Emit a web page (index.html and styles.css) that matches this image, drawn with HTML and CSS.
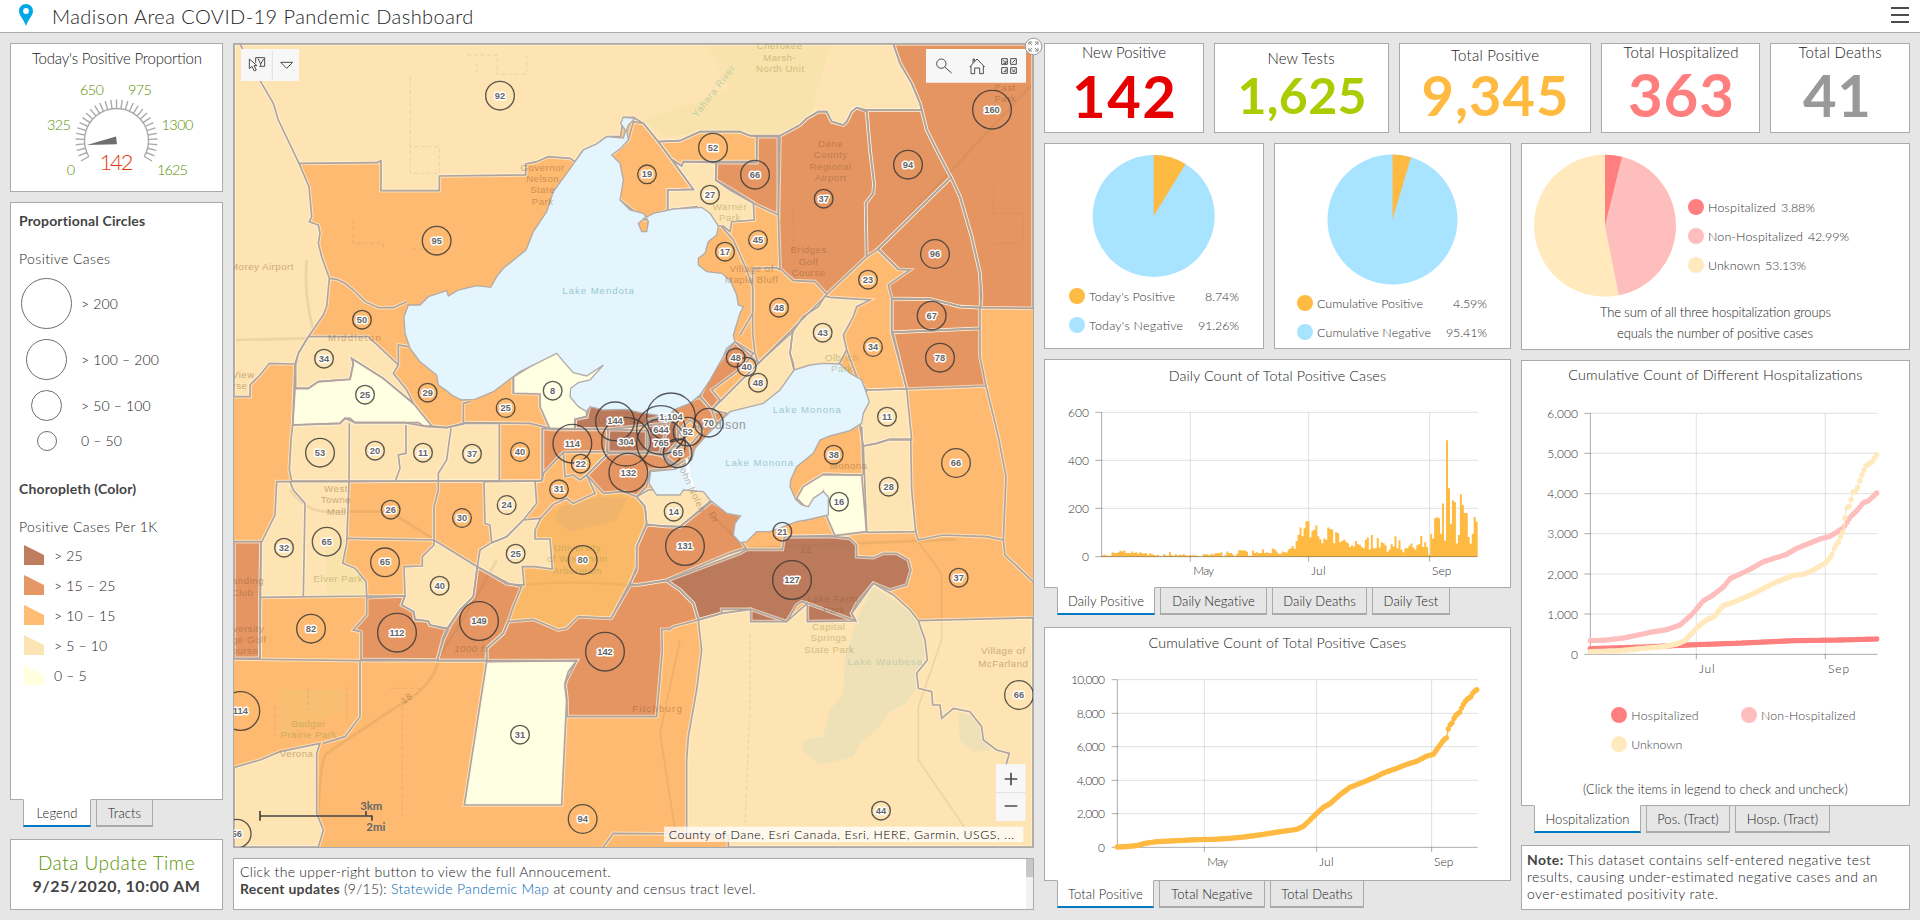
FILE: index.html
```html
<!DOCTYPE html>
<html lang="en">
<head>
<meta charset="utf-8">
<title>Madison Area COVID-19 Pandemic Dashboard</title>
<link rel="stylesheet" href="styles.css">
</head>
<body>
<header class="header">
  <svg class="pin" viewBox="0 0 14 22" width="14" height="22"><path d="M7 0C3 0 0 3 0 7c0 4.500 4.500 8 7 15 2.500-7 7-10.500 7-15 0-4-3-7-7-7z" fill="#00a9e6"/><circle cx="7" cy="7" r="2.900" fill="#fff"/></svg>
  <h1 class="title">Madison Area COVID-19 Pandemic Dashboard</h1>
  <div class="menu"><i></i><i></i><i></i></div>
</header>
<main class="board">
  <section class="col left">
    <div class="panel gauge">
      <svg width="211" height="147" viewBox="11 44 211 147">
        <text class="t" x="117" y="64" textLength="170" font-size="15">Today's Positive Proportion</text>
        <g id="ticks" stroke="#aaa" stroke-width="1.400" fill="none"></g>
        <path d="M86.800 145 116 136.500 117 144.300Z" fill="#6e6e6e"/>
        <g class="green" font-size="14.500">
          <text x="92" y="95" textLength="24">650</text><text x="140" y="95" textLength="24">975</text>
          <text x="59" y="130" textLength="24">325</text><text x="177.500" y="130" textLength="32">1300</text>
          <text x="71" y="175">0</text><text x="172.500" y="175" textLength="31">1625</text>
        </g>
        <text x="116.500" y="170" textLength="34" font-size="22" text-anchor="middle" fill="#e03c08">142</text>
      </svg>
    </div>
    <div class="tabbed">
      <div class="panel legend">
        <h2>Proportional Circles</h2>
        <p class="sub">Positive Cases</p>
        <ul class="sizes">
          <li class="s1"><i></i><span>&gt; 200</span></li>
          <li class="s2"><i></i><span>&gt; 100 – 200</span></li>
          <li class="s3"><i></i><span>&gt; 50 – 100</span></li>
          <li class="s4"><i></i><span>0 – 50</span></li>
        </ul>
        <h2>Choropleth (Color)</h2>
        <p class="sub">Positive Cases Per 1K</p>
        <ul class="colors">
          <li class="c1"><i></i><span>&gt; 25</span></li>
          <li class="c2"><i></i><span>&gt; 15 – 25</span></li>
          <li class="c3"><i></i><span>&gt; 10 – 15</span></li>
          <li class="c4"><i></i><span>&gt; 5 – 10</span></li>
          <li class="c5"><i></i><span>0 – 5</span></li>
        </ul>
      </div>
      <nav class="tabs"><a class="on w68">Legend</a><a class="w57">Tracts</a></nav>
    </div>
    <div class="panel date"><p class="d1">Data Update Time</p><p class="d2">9/25/2020, 10:00 AM</p></div>
  </section>

  <section class="col middle">
    <div class="panel map">
      <svg width="799" height="803" viewBox="12 12 2397 2409">
        <defs>
          <path id="mendota" d="M1172 250L1180 232 1215 235 1195 255 1190 270 1195 300 1172 325 1145 345 1170 370 1180 420 1170 480 1200 510 1240 520 1248 530 1225 550 1235 575 1250 575 1255 545 1248 532 1270 520 1330 507 1415 502 1440 520 1465 558 1460 585 1435 605 1425 640 1405 655 1405 675 1430 695 1475 700 1500 720 1520 765 1525 795 1540 800 1530 820 1510 885 1515 905 1490 925 1480 950 1440 1020 1410 1065 1380 1090 1335 1108 1310 1130 1230 1118 1190 1108 1120 1110 1080 1100 1070 1115 1045 1100 1020 1070 1022 1045 1045 1028 1080 1020 1120 975 1070 1008 1030 998 1005 970 980 940 920 970 870 995 790 1055 735 1078 695 1080 665 1065 650 1052 625 1035 620 1005 570 965 540 925 525 880 522 830 535 795 570 795 595 770 650 752 655 768 685 750 740 737 782 742 800 710 820 685 888 630 910 575 950 515 970 455 1010 400 1035 365 1060 330 1100 312 1130 290 1180 294 1187 272Z"/>
          <path id="monona" d="M1692 990L1740 975 1780 970 1830 972 1860 1000 1895 1020 1908 1055 1918 1085 1900 1120 1895 1150 1860 1172 1800 1188 1770 1200 1750 1240 1700 1280 1682 1320 1680 1340 1697 1378 1715 1395 1735 1400 1750 1375 1780 1355 1795 1370 1795 1425 1730 1440 1700 1445 1620 1475 1580 1475 1550 1505 1530 1508 1510 1485 1515 1450 1532 1428 1490 1420 1440 1380 1420 1355 1360 1350 1350 1365 1280 1365 1257 1330 1262 1295 1335 1288 1385 1260 1395 1225 1440 1175 1500 1115 1600 1090 1650 1050Z"/>
        </defs>
        <rect x="12" y="12" width="2397" height="2409" fill="#fdba70"/>
        <g id="regions" class="regions"></g>
        <g class="roads">
          <path d="M230 660Q220 760 250 870"/><path d="M12 900L235 895"/><path d="M2409 130L1943 628" opacity=".8"/>
          <path d="M625 1862Q610 1940 500 2000L290 2140Q270 2160 265 2330"/><path d="M180 1350Q230 1415 290 1415L480 1415 740 1580"/>
          <path d="M880 1635Q1000 1620 1200 1635"/><path d="M1440 1420L1550 1525 1880 1510 2180 1498"/><path d="M2060 1500L2135 1600 2135 1800 2065 2000 2065 2160 2230 2400" stroke-width="5"/>
          <path d="M800 1560L740 1670 620 1862"/><path d="M1350 1800L1290 2080 1340 2400" stroke-width="5"/>
        </g>
        <g class="water2"><path d="M1880 1740L1930 1640 1990 1680 2040 1715 2070 1760 2085 1850 2055 1900 2060 1945 2025 1990 1980 2015 1940 2070 1890 2110 1870 2150 1770 2175 1715 2130 1720 2100 1780 2090 1800 2010 1840 1960 1845 1850Z"/><path d="M2185 2020Q2240 2020 2258 2070L2285 2130 2230 2135 2190 2100Z"/></g>
        <g class="green2"><path d="M1430 12H1800L1740 230 1650 285H1300L1240 240 1500 150Z"/><path d="M290 1490L350 1500 400 1620 410 1665H290Z"/><path d="M150 1950H345V2010L150 2090Z"/></g>
        <path class="arb" d="M1000 1395L1095 1385 1105 1362 1200 1358 1235 1390 1248 1450 1215 1520 1215 1600 1140 1735 1045 1728 985 1765 910 1732 838 1738 890 1590 965 1590 960 1497 918 1495 935 1435Z"/>
        <path d="M990 1400L1110 1370 1190 1375 1160 1440 1020 1475 975 1440Z" fill="#eab070" opacity=".6"/>
        <g class="detail"><path d="M541 110V400H628V320H541M712 45H802V102H890V45M370 540V610H460V628M546 628H640M740 70V100"/><path d="M135 2000V2090M235 1945V2010M350 1940V2030M517 1980V2330M1560 1780V2000L1545 2350M480 1945H580M2040 820H2180M1690 500V640M2290 440V520H2380V610H2270"/></g>
        <g id="borders"></g>
        <g fill="#e4f5fe" stroke="#b3aca9" stroke-width="4"><use href="#mendota"/><use href="#monona"/></g>
        <path d="M1370 1255L1378 1310 1395 1350" stroke="#fff" stroke-width="8" fill="none"/>
        <g class="places">
          <g fill="#9bc9cf"><text x="1105" y="762" textLength="216">Lake Mendota</text><text x="1731" y="1120" textLength="206">Lake Monona</text><text x="1588" y="1279" textLength="205">Lake Monona</text></g>
          <g fill="#c2cfaa"><text x="1965" y="1876" textLength="225">Lake Waubesa</text><text x="1447" y="165" transform="rotate(-52 1447 150)" textLength="190">Yahara River</text></g>
          <g fill="#a49a50" opacity=".5"><text x="1649" y="28">Cherokee</text><text x="1649" y="63">Marsh-</text><text x="1651" y="96">North Unit</text><text x="1500" y="510">Warner</text><text x="1500" y="542">Park</text><text x="1836" y="963">Olbrich</text><text x="1836" y="996">Park</text><text x="325" y="1625">Elver Park</text><text x="1796" y="1770">Capital</text><text x="1796" y="1803">Springs</text><text x="1798" y="1838">State Park</text><text x="236" y="2062">Badger</text><text x="236" y="2094">Prairie Park</text><text x="1042" y="1532">University</text><text x="1042" y="1567">of Wisconsin</text><text x="1042" y="1601">Arboretum</text></g>
          <g fill="#8b5730" opacity=".42"><text x="938" y="393">Governor</text><text x="938" y="426">Nelson</text><text x="938" y="459">State</text><text x="938" y="494">Park</text><text x="1802" y="321">Dane</text><text x="1802" y="354">County</text><text x="1802" y="390">Regional</text><text x="1802" y="423">Airport</text><text x="1736" y="639">Bridges</text><text x="1736" y="674">Golf</text><text x="1736" y="708">Course</text><text x="1565" y="697">Village of</text><text x="1565" y="730">Maple Bluff</text><text x="2326" y="153">East</text><text x="2326" y="186">Park</text><text x="374" y="902" textLength="160">Middleton</text><text x="96" y="690">Morey Airport</text><text x="40" y="1014">View</text><text x="30" y="1047">rse</text><text x="318" y="1357">West</text><text x="318" y="1389">Towne</text><text x="320" y="1424">Mall</text><text x="54" y="1632">anding</text><text x="38" y="1668">Club</text><text x="56" y="1776">versity</text><text x="58" y="1808">ge Golf</text><text x="45" y="1841">ourse</text><text x="200" y="2152">Verona</text><text x="1282" y="2017" textLength="150">Fitchburg</text><text x="1808" y="1686">Lake Farm</text><text x="1812" y="1719">Park</text><text x="1728" y="1538">12</text><text x="1856" y="1286">Monona</text><text x="2320" y="1843">Village of</text><text x="2320" y="1882">McFarland</text><text x="722" y="1836" font-style="italic">1000 ft</text><text x="530" y="1985" transform="rotate(-35 530 1975)">18</text><text x="1175" y="1152">University</text><text x="1450" y="1435" transform="rotate(60 1445 1430)">Dr</text><text x="1400" y="1350" transform="rotate(65 1390 1330)">John Nolen</text></g>
          <text x="1475" y="1167" font-size="36" fill="#999">Madison</text>
        </g>
        <g id="bubbles" class="bubbles"></g>
        <g fill="#f7f7f7"><path d="M33 27H207V123H33ZM2088 27H2388V128H2088ZM2298 2173H2387V2343H2298Z"/></g>
        <path d="M127 30V120M2298 2258H2387" stroke="#e0e0e0" stroke-width="3"/>
        <g class="ic"><path d="M152 67H188L170 85Z"/><path d="M58 57V86L66 79 73 93 79 90 72 77H81ZM77 68V53H104V79H88M84 56L92 72 101 57M92 72V78"/>
          <circle cx="2134" cy="71" r="14"/><path d="M2144 81L2165 99"/><path d="M2219 81L2241 57 2264 81M2223 78V101H2234V84H2249V101H2260V78M2229 68V57H2233V64"/>
          <path d="M2315 56H2332V73H2315ZM2342 56H2359V73H2342ZM2315 83H2332V100H2315ZM2342 83H2359V100H2342ZM2318 60L2328 70M2328 62V70H2320M2347 68L2356 59M2321 94H2328V87M2346 88L2355 97M2348 96L2355 88"/></g>
        <path d="M2324 2217H2362M2343 2198V2236M2324 2298H2362" stroke="#4c4c4c" stroke-width="5"/>
        <rect x="1302" y="2360" width="1078" height="46" fill="#fff" opacity=".75"/>
        <text x="1316" y="2396" font-size="37" textLength="1036" fill="#000">County of Dane, Esri Canada, Esri, HERE, Garmin, USGS, ...</text>
        <path d="M90 2313V2342M90 2328H428M408 2313V2328M426 2328V2342" stroke="#444" stroke-width="5" fill="none"/>
        <g class="scale" fill="#666" font-weight="700" font-size="34"><text x="391" y="2309" textLength="66">3km</text><text x="409" y="2373" textLength="57">2mi</text></g>
      </svg>
      <svg class="expand" width="19" height="19" viewBox="0 0 19 19"><circle cx="9.500" cy="9.500" r="8.300" fill="#fff" stroke="#999"/><path d="M5 8V5H8M11 5H14V8M14 11V14H11M8 14H5V11M5 5L8 8M14 5L11 8M14 14L11 11M5 14L8 11" fill="none" stroke="#888"/></svg>
    </div>
    <div class="panel news"><p class="n1">Click the upper-right button to view the full Annoucement.</p><p class="n2"><b>Recent updates</b> (9/15): <a>Statewide Pandemic Map</a> at county and census tract level.</p><span class="bar"><i></i></span></div>
  </section>

  <section class="col right">
    <div class="cards">
      <div class="panel k1"><svg width="158" height="88"><text class="t" x="79" y="14" textLength="84">New Positive</text><text class="n" x="79" y="74" textLength="104" font-size="58" fill="#e60000">142</text></svg></div>
      <div class="panel k2"><svg width="173" height="88"><text class="t" x="86" y="20" textLength="67">New Tests</text><text class="n" x="87" y="70" textLength="129" font-size="50" fill="#aacc00">1,625</text></svg></div>
      <div class="panel k3"><svg width="190" height="88"><text class="t" x="95" y="17" textLength="88">Total Positive</text><text class="n" x="95" y="72" textLength="147" font-size="56" fill="#ffba42">9,345</text></svg></div>
      <div class="panel k4"><svg width="157" height="88"><text class="t" x="79" y="14" textLength="115">Total Hospitalized</text><text class="n" x="79" y="73" textLength="106" font-size="60" fill="#ff7f7f">363</text></svg></div>
      <div class="panel k5"><svg width="138" height="88"><text class="t" x="69" y="14" textLength="83">Total Deaths</text><text class="n" x="66" y="73" textLength="68" font-size="58" fill="#999">41</text></svg></div>
    </div>
    <div class="split">
      <div class="c467">
        <div class="pies">
          <div class="panel p1"><svg width="218" height="204" viewBox="1045 144 218 204"><circle cx="1153.700" cy="216" r="61" fill="#a8e4ff"/><path d="M1153.700 216V155A61 61 0 0 1 1185.600 164Z" fill="#ffba42"/>
            <circle cx="1077" cy="296" r="8" fill="#ffba42"/><circle cx="1077" cy="325" r="8" fill="#a8e4ff"/>
            <g class="lg"><text x="1089" y="301" textLength="86">Today's Positive</text><text x="1089" y="330" textLength="94">Today's Negative</text><text x="1205" y="301" textLength="34">8.74%</text><text x="1198" y="330" textLength="41">91.26%</text></g></svg></div>
          <div class="panel p2"><svg width="235" height="204" viewBox="1275 144 235 204"><circle cx="1392.500" cy="219.500" r="65" fill="#a8e4ff"/><path d="M1392.500 219.500V154.500A65 65 0 0 1 1411 157.200Z" fill="#ffba42"/>
            <circle cx="1305" cy="303" r="8" fill="#ffba42"/><circle cx="1305" cy="332" r="8" fill="#a8e4ff"/>
            <g class="lg"><text x="1317" y="308" textLength="106">Cumulative Positive</text><text x="1317" y="337" textLength="114">Cumulative Negative</text><text x="1453" y="308" textLength="34">4.59%</text><text x="1446" y="337" textLength="41">95.41%</text></g></svg></div>
        </div>
        <div class="tabbed daily">
          <div class="panel"><svg width="465" height="227" viewBox="45 30 1395 681">
            <text class="t3" x="742" y="94" textLength="652">Daily Count of Total Positive Cases</text>
            <g class="grid"><path d="M215 187H1343M215 331H1343M215 475H1343M481 187V620M836 187V620M1199 187V620"/></g>
            <g id="bars" fill="#ffba42"></g>
            <g class="axis"><path d="M196 187H215V620H196M196 331H215M196 475H215M215 620H1343M481 620V635M836 620V635M1199 620V635"/></g>
            <g class="ay"><text x="177" y="201">600</text><text x="177" y="345">400</text><text x="177" y="489">200</text><text x="177" y="633">0</text></g>
            <g class="ax"><text x="490" y="676" textLength="62">May</text><text x="843" y="676" textLength="44">Jul</text><text x="1206" y="676" textLength="58">Sep</text></g>
          </svg></div>
          <nav class="tabs"><a class="on w98">Daily Positive</a><a class="w107">Daily Negative</a><a class="w95">Daily Deaths</a><a class="w78">Daily Test</a></nav>
        </div>
        <div class="tabbed total">
          <div class="panel"><svg width="465" height="251" viewBox="45 27 1395 753">
            <text class="t3" x="742" y="87" textLength="773">Cumulative Count of Total Positive Cases</text>
            <g class="grid"><path d="M262 182H1343M262 283H1343M262 383H1343M262 484H1343M262 584H1343M523 182V685M860 182V685M1205 182V685"/></g>
            <g class="axis"><path d="M245 182H262V685H245M245 283H262M245 383H262M245 484H262M245 584H262M262 685H1343M523 685V699M860 685V699M1205 685V699"/></g>
            <g id="cum"></g>
            <g class="ay"><text x="225" y="195" textLength="102">10,000</text><text x="225" y="297" textLength="85">8,000</text><text x="225" y="397" textLength="85">6,000</text><text x="225" y="498" textLength="85">4,000</text><text x="225" y="598" textLength="85">2,000</text><text x="225" y="699">0</text></g>
            <g class="ax"><text x="532" y="742" textLength="62">May</text><text x="867" y="742" textLength="44">Jul</text><text x="1212" y="742" textLength="58">Sep</text></g>
          </svg></div>
          <nav class="tabs"><a class="on w97">Total Positive</a><a class="w106">Total Negative</a><a class="w94">Total Deaths</a></nav>
        </div>
      </div>
      <div class="c389">
        <div class="panel p3"><svg width="387" height="205" viewBox="1522 144 387 205"><circle cx="1605" cy="225.700" r="71" fill="#ffe9bd"/><path d="M1605 225.700L1622.100 156.800A71 71 0 0 1 1618.900 295.300Z" fill="#ffbebe"/><path d="M1605 225.700V154.700A71 71 0 0 1 1622.100 156.800Z" fill="#ff7f7f"/>
          <circle cx="1696" cy="207" r="8" fill="#ff7f7f"/><circle cx="1696" cy="236" r="8" fill="#ffbebe"/><circle cx="1696" cy="265" r="8" fill="#ffe9bd"/>
          <g class="lg"><text x="1708" y="212" textLength="68">Hospitalized</text><text x="1781" y="212" textLength="34">3.88%</text><text x="1708" y="241" textLength="95">Non-Hospitalized</text><text x="1808" y="241" textLength="41">42.99%</text><text x="1708" y="270" textLength="52">Unknown</text><text x="1765" y="270" textLength="41">53.13%</text></g>
          <g fill="#222" font-size="13"><text x="1600" y="317" textLength="231">The sum of all three hospitalization groups</text><text x="1617" y="338" textLength="196">equals the number of positive cases</text></g></svg></div>
        <div class="tabbed hosp">
          <div class="panel"><svg width="387" height="444" viewBox="36 33 1161 1332">
            <text class="t3" x="616" y="91" textLength="882">Cumulative Count of Different Hospitalizations</text>
            <g class="grid"><path d="M241 190H1103M241 310H1103M241 431H1103M241 551H1103M241 672H1103M241 792H1103M559 190V913M946 190V913"/></g>
            <g class="axis"><path d="M223 190H241V913H223M223 310H241M223 431H241M223 551H241M223 672H241M223 792H241M241 913H1103M559 913V928M946 913V928"/></g>
            <g id="hosp"></g>
            <g class="ay"><text x="204" y="203" textLength="92">6,000</text><text x="204" y="324" textLength="92">5,000</text><text x="204" y="444" textLength="92">4,000</text><text x="204" y="564" textLength="92">3,000</text><text x="204" y="686" textLength="92">2,000</text><text x="204" y="806" textLength="92">1,000</text><text x="204" y="926">0</text></g>
            <g class="ax"><text x="567" y="970" textLength="47">Jul</text><text x="954" y="970" textLength="63">Sep</text></g>
            <circle cx="327" cy="1095" r="24" fill="#ff7f7f"/><circle cx="717" cy="1095" r="24" fill="#ffbebe"/><circle cx="327" cy="1183" r="24" fill="#ffe9bd"/>
            <g fill="#444" font-size="37"><text x="364" y="1109" textLength="202">Hospitalized</text><text x="753" y="1109" textLength="284">Non-Hospitalized</text><text x="364" y="1197" textLength="153">Unknown</text></g>
            <text x="219" y="1332" font-size="38" textLength="794" fill="#222">(Click the items in legend to check and uncheck)</text>
          </svg></div>
          <nav class="tabs"><a class="on w107">Hospitalization</a><a class="w84">Pos. (Tract)</a><a class="w95">Hosp. (Tract)</a></nav>
        </div>
        <div class="panel note"><b>Note:</b> This dataset contains self-entered negative test<br>results, causing under-estimated negative cases and an<br>over-estimated positivity rate.</div>
      </div>
    </div>
  </section>
</main>
<script src="script.js"></script>
</body>
</html>
```
FILE: styles.css
```css
* { box-sizing: border-box; margin: 0; padding: 0; }
body { width: 1920px; height: 920px; overflow: hidden; background: #e6e6e6; color: #222; font-family: Lato, "Open Sans", sans-serif; font-weight: 300; }
b { font-weight: 700; color: #444; }
ul { list-style: none; }
svg { display: block; }
svg text { font-family: Lato, "Open Sans", sans-serif; }
.header { height: 33px; background: #fff; border-bottom: 1px solid #aaa; display: flex; align-items: center; padding: 0 11px 0 19px; }
.pin { margin-top: -2px; }
.title { font-size: 20px; font-weight: 300; line-height: 30px; margin-left: 19px; flex: 1; letter-spacing: .44px; margin-top: -1px; }
.menu { display: flex; flex-direction: column; gap: 5px; margin-top: -3px; }
.menu i { width: 18px; height: 2px; background: #4c4c4c; }
.board { display: grid; grid-template-columns: 213px 801px 866px; gap: 10px; padding: 10px; height: 887px; }
.col { display: flex; flex-direction: column; min-width: 0; }
.panel { background: #fff; border: 1px solid #aaa; }
.left .gauge { height: 149px; margin-bottom: 10px; }
.t { text-anchor: middle; fill: #222; font-size: 15px; }
.green { fill: #5a8f00; text-anchor: middle; }
.legend { height: 598px; padding: 8px 8px 0; }
.legend h2 { font-size: 14px; font-weight: 700; line-height: 20px; letter-spacing: .15px; color: #444; }
.legend .sub { font-size: 14px; line-height: 20px; margin-top: 18px; letter-spacing: .4px; }
.sizes li, .colors li { display: flex; align-items: center; font-size: 14px; letter-spacing: .15px; }
.sizes li i { border: 1.500px solid #6e6e6e; border-radius: 50%; margin: 0 auto; }
.sizes li { display: grid; grid-template-columns: 55px 1fr; column-gap: 7px; }
.sizes { padding-top: 8px; height: 210px; }
.s1 i { width: 51px; height: 51px; } .s2 i { width: 41px; height: 41px; } .s3 i { width: 31px; height: 31px; } .s4 i { width: 20px; height: 20px; }
.s1 { height: 52px; } .s2 { height: 61px; } .s3 { height: 30px; } .s4 { height: 41px; }
.legend .colors { padding-top: 3px; }
.colors li { height: 30px; padding-left: 5px; gap: 10px; }
.colors i { width: 20px; height: 20px; clip-path: polygon(0 0, 100% 50%, 100% 100%, 0 100%); }
.c1 i { background: #bf7d5f; } .c2 i { background: #e59865; } .c3 i { background: #fdbd74; } .c4 i { background: #fde4b4; } .c5 i { background: #ffffe0; }
.tabs { display: flex; gap: 5px; padding-left: 13px; height: 28px; margin-top: -1px; position: relative; }
.tabs a { height: 28px; line-height: 26px; text-align: center; font-size: 13px; border: 1px solid #aaa; border-bottom-width: 2px; letter-spacing: .1px; white-space: nowrap; }
.tabs .on { background: #fff; border-top-color: #fff; border-bottom-color: #007ac2; }
.w57 { width: 57px; } .w68 { width: 68px; } .w78 { width: 78px; } .w84 { width: 84px; } .w94 { width: 94px; } .w95 { width: 95px; } .w97 { width: 97px; } .w98 { width: 98px; } .w106 { width: 106px; } .w107 { width: 107px; }
.date { margin-top: 12px; height: 71px; text-align: center; padding-top: 11px; }
.d1 { color: #5a9400; font-size: 19px; line-height: 24px; letter-spacing: .5px; }
.d2 { font-size: 16px; font-weight: 700; line-height: 21px; letter-spacing: .5px; color: #444; }
.map { height: 805px; position: relative; }
.expand { position: absolute; right: -10px; top: -7px; }
.regions path { stroke: none; }
.roads { fill: none; stroke: #8a6a40; stroke-opacity: .13; stroke-width: 8; }
.water2 { fill: #d8dcc0; opacity: .4; }
.green2 { fill: #d8dd80; opacity: .12; }
.arb { fill: #f3b657; opacity: .35; }
.detail { fill: none; stroke: #7a6a40; stroke-opacity: .14; stroke-width: 3; stroke-dasharray: 12 8; }
.places text { font-family: "Liberation Sans", Arial, sans-serif; font-weight: 400; text-anchor: middle; letter-spacing: 1.500px; }
.places { font-size: 29px; }
.bubbles circle { fill: none; stroke: #333; stroke-opacity: .8; stroke-width: 4; }
.bubbles text { font: 700 28px "Liberation Sans", Arial, sans-serif; fill: #666; stroke: #fff; stroke-width: 9px; stroke-linejoin: round; paint-order: stroke; text-anchor: middle; }
.ic { fill: none; stroke: #4c4c4c; stroke-width: 3; }
.scale text { font-family: Lato, sans-serif; }
.news { margin-top: 10px; height: 52px; padding: 4px 6px; font-size: 14px; line-height: 17px; position: relative; }
.news a { color: #0068b0; }
.n1 { letter-spacing: .3px; } .n2 { letter-spacing: .27px; }
.bar { position: absolute; right: 0; top: 0; width: 7px; height: 50px; background: #f1f1f1; }
.bar i { display: block; height: 18px; background: #c8c8c8; }
.cards { display: flex; gap: 10px; height: 90px; }
.n { text-anchor: middle; font-weight: 700; }
.k1 { width: 160px; } .k2 { width: 175px; } .k3 { width: 192px; } .k4 { width: 159px; } .k5 { width: 140px; }
.split { display: flex; gap: 10px; margin-top: 10px; }
.c467 { width: 467px; } .c389 { width: 389px; }
.pies { display: flex; gap: 10px; height: 206px; }
.p1 { width: 220px; } .p2 { width: 237px; }
.lg { fill: #333; font-size: 12.500px; }
.daily { margin-top: 10px; } .daily .panel { height: 229px; }
.total { margin-top: 12px; } .total .panel { height: 254px; }
.t3 { text-anchor: middle; fill: #222; font-size: 43px; }
.grid { fill: none; stroke: #000; stroke-opacity: .12; stroke-width: 3; }
.axis { fill: none; stroke: #000; stroke-opacity: .33; stroke-width: 3; }
.ay { text-anchor: end; fill: #333; font-size: 36px; }
.ax { fill: #333; font-size: 36px; }
.p3 { height: 207px; }
.hosp { margin-top: 10px; } .hosp .panel { height: 446px; }
.note { margin-top: 12px; height: 65px; padding: 5px 5px; font-size: 14px; line-height: 17px; letter-spacing: .4px; white-space: nowrap; }
```
FILE: script.js
```js
const NS = 'http://www.w3.org/2000/svg';
function add(id, tag, attrs, text) {
  const e = document.createElementNS(NS, tag);
  for (const k in attrs) e.setAttribute(k, attrs[k]);
  if (text !== undefined) e.textContent = text;
  document.getElementById(id).appendChild(e);
}

// gauge ticks
for (let i = 0; i <= 30; i++) {
  const a = (150 + i * 8) * Math.PI / 180, c = Math.cos(a), s = Math.sin(a);
  add('ticks', 'path', { d: `M${116.5 + 32 * c} ${140.5 + 32 * s}L${116.5 + 41 * c} ${140.5 + 41 * s}` });
}
add('ticks', 'path', { d: 'M88.8 156.500A32 32 0 1 1 144.200 156.500' });

// choropleth: colour class and outline
const L = '#fde4b2', D = '#e59562', B = '#bc7a5c', P = '#ffffe2', O = '#fdba70';
const regions = [
  [L, '12 12 1990 12 2010 70 2045 130 2070 190 2075 210 1910 210 1880 203 1865 215 1850 245 1840 255 1805 245 1790 215 1765 215 1730 235 1710 255 1650 287 1560 287 1530 275 1410 275 1350 302 1285 305 1240 250 1210 232 1180 232 1172 290 1130 290 1100 312 1060 330 1035 365 1020 355 955 350 920 365 887 372 887 405 628 408 628 452 453 452 453 362 440 368 207 370 237 440 245 530 238 545 265 555 270 580 265 610 275 650 298 715 290 800 280 825 235 890 205 940 195 972 118 970 90 1005 60 1035 60 1070 12 1070'],
  [L, '235 890 415 890 505 975 490 1000 530 1050 550 1090 460 1015 365 955 370 970 360 1018 265 1025 235 1045 197 1045 197 975 205 940'],
  [P, '365 955 460 1015 550 1090 605 1158 580 1158 565 1148 375 1148 360 1135 345 1135 330 1150 188 1155 195 1045 235 1045 265 1025 360 1018 370 970'],
  [P, '850 1010 980 930 1150 975 1070 1110 1070 1130 1035 1138 1035 1168 960 1168 930 1100 930 1062 850 1060'],
  [O, '1210 245 1240 250 1285 305 1390 448 1313 450 1313 510 1245 540 1170 480 1145 345 1195 300'],
  [O, '1285 305 1350 302 1410 275 1530 275 1560 287 1580 290 1580 365 1360 365 1355 378 1325 358'],
  [D, '1580 290 1645 290 1645 525 1570 490 1500 450 1457 420 1460 368 1580 368'],
  [L, '1360 365 1458 368 1457 420 1500 445 1570 488 1573 540 1505 545 1500 575 1480 558 1465 558 1400 500 1313 510 1313 450 1390 448 1325 358 1355 378'],
  [D, '1650 287 1710 255 1730 235 1765 215 1790 215 1805 245 1840 255 1850 245 1865 215 1880 203 1910 215 1920 330 1932 430 1930 460 1907 490 1910 650 1790 763 1755 725 1690 722 1650 685 1645 525'],
  [D, '1910 210 2075 210 2090 270 2125 340 2163 412 1943 628 1910 650 1907 490 1930 460 1932 430 1920 330'],
  [D, '1990 12 2409 12 2409 805 2250 803 2255 770 2250 700 2225 590 2190 470 2163 412 2125 340 2090 270 2070 190 2045 130 2010 70'],
  [D, '2163 412 2190 470 2225 590 2250 700 2253 803 2190 800 2100 777 1985 775 1975 735 2040 690 2005 688 1943 628'],
  [D, '1985 778 2100 777 2190 800 2250 803 2250 865 1985 877'],
  [D, '1988 877 2250 865 2250 950 2268 1038 2030 1047'],
  [L, '1800 772 1920 780 1880 800 1870 830 1840 885 1850 930 1830 968 1780 990 1692 990 1690 970 1680 940 1688 875 1720 830 1765 800 1785 768'],
  [L, '1688 875 1680 940 1692 990 1650 1070 1600 1110 1500 1125 1460 1150 1445 1110 1585 970'],
  [D, '1515 905 1570 940 1540 980 1445 1050 1470 1080 1445 1110 1410 1070 1440 1000'],
  [D, '1410 1070 1445 1110 1490 1120 1440 1180 1380 1260 1340 1290 1290 1240 1330 1100'],
  [L, '1910 1050 2030 1047 2045 1200 1975 1200 1940 1210 1900 1218 1890 1160'],
  [L, '1900 1218 1940 1210 1980 1197 2042 1197 2045 1350 2057 1475 1910 1477'],
  [P, '1700 1375 1720 1340 1760 1315 1780 1303 1895 1305 1910 1475 1815 1487 1790 1430 1780 1355 1745 1420'],
  [L, '1220 1370 1255 1350 1350 1350 1420 1345 1445 1380 1350 1460 1310 1460 1250 1453 1245 1400'],
  [D, '1445 1385 1490 1410 1540 1430 1520 1485 1548 1525 1500 1540 1310 1620 1230 1635 1200 1632 1220 1580 1220 1520 1250 1455 1350 1460'],
  [D, '1200 1637 1310 1622 1350 1650 1390 1690 1405 1740 1330 1760 1320 1768 1295 1768 1297 1830 1280 2030 1012 2030 1010 1970 1005 1930 1015 1895 1040 1862 770 1862 770 1825 820 1780 835 1745 910 1738 985 1770 1010 1765 1045 1730 1143 1735'],
  [L, '1405 1740 1475 1720 1562 1708 1670 1745 1732 1690 1877 1743 1865 1720 1930 1630 1990 1665 2040 1710 2065 1742 2409 1733 2409 2421 1495 2421 1495 2385 1370 2380 1370 2160 1375 2090 1400 1950 1415 1830'],
  [B, '1310 1622 1530 1540 1550 1528 1657 1528 1663 1490 1810 1490 1860 1495 1880 1515 1880 1550 1930 1553 1960 1540 2000 1540 2035 1560 2043 1590 2030 1635 1980 1650 1930 1630 1880 1690 1865 1720 1877 1743 1732 1745 1732 1690 1715 1685 1700 1695 1670 1745 1562 1745 1562 1708 1475 1708 1475 1720 1405 1740 1390 1690 1350 1650'],
  [P, '770 1865 1040 1862 1010 1920 1005 1940 1010 1980 995 2295 703 2295'],
  [D, '742 1580 835 1630 875 1640 850 1700 835 1745 820 1780 770 1825 770 1862 622 1862 640 1790 655 1760 690 1710 730 1670'],
  [D, '410 1673 525 1668 515 1695 552 1715 555 1740 595 1743 600 1755 655 1768 640 1800 622 1860 393 1858 393 1775 370 1770 410 1725'],
  [L, '612 1500 742 1580 730 1670 690 1710 655 1765 600 1755 595 1743 555 1738 550 1715 515 1695 525 1668 522 1580 577 1578 577 1550 612 1515'],
  [L, '140 1325 357 1325 350 1510 338 1570 375 1585 408 1625 410 1668 90 1672 93 1510 135 1425'],
  [L, '188 1155 330 1150 345 1135 375 1148 525 1148 590 1160 650 1163 700 1150 808 1150 808 1323 185 1323 178 1290 183 1200'],
  [L, '762 1325 915 1323 920 1390 880 1440 830 1490 785 1508 780 1455 765 1450'],
  [L, '742 1580 750 1530 785 1508 830 1490 880 1440 932 1435 915 1470 915 1497 960 1497 967 1587 915 1580 877 1580 882 1635 830 1632'],
  [D, '937 1165 1135 1168 1130 1235 1000 1237 940 1300 937 1320'],
  [B, '1035 1138 1070 1130 1080 1095 1230 1100 1340 1120 1310 1150 1130 1168 1035 1168'],
  [B, '1133 1168 1250 1172 1250 1237 1133 1237'],
  [B, '1255 1140 1340 1120 1345 1200 1310 1250 1255 1237'],
  [O, '1345 1175 1380 1140 1415 1175 1380 1215'],
  [D, '1330 1220 1380 1215 1385 1250 1340 1275 1305 1250'],
  [D, '1135 1240 1290 1240 1350 1290 1260 1290 1250 1340 1220 1370 1180 1355 1120 1360 1070 1305'],
  [D, '12 1505 93 1505 90 1855 12 1855'],
  [L, '12 2182 90 2160 150 2135 270 2110 260 2140 260 2320 280 2370 265 2421 12 2421']
];
const lines = [
  '30 12 62 70 95 130 130 190 145 240 207 370',
  '298 715 320 718 345 730 370 750 405 785 445 803 490 803 530 785',
  '505 975 505 915 535 920', '605 1158 650 1163 700 1152 700 1090 722 1085', '700 1148 900 1150 960 1165', '850 1010 850 1060',
  '1475 560 1510 600 1550 690 1568 740 1568 820 1530 885', '1568 685 1640 683 1650 690', '1568 685 1568 880 1575 940 1585 970 1790 765',
  '1515 905 1585 970 1445 1110', '2268 1038 2305 1190 2328 1310 2320 1500 2325 1545 2409 1625', '2057 1475 2065 1500 2140 1485 2270 1490 2320 1500',
  '2030 1047 1910 1050', '1985 775 1985 877 2030 1047', '2065 1742 2085 1800 2092 1860 2060 1900 2065 1945 2105 1955 2108 1995 2130 1995 2135 2035 2170 2005 2220 2015 2255 2060 2260 2100 2300 2130 2338 2140 2328 2175',
  '1120 2421 1150 2380 1370 2382', '12 1857 390 1862 770 1862', '390 1862 390 2030 345 2090 280 2110', '195 975 188 1155', '90 1672 90 1855',
  '358 1150 357 1325 610 1323 937 1323', '528 1155 528 1240 505 1245 510 1285 497 1320', '663 1165 650 1260 625 1300 625 1350 612 1400 612 1500 350 1495',
  '937 1165 937 1320 915 1325', '180 1325 190 1350 225 1390 220 1670', '1000 1237 1005 1310 1030 1305 1050 1320 1070 1305 1135 1240',
  '1070 1305 1095 1360 1030 1390 1010 1375 970 1393 932 1435', '1220 1370 1245 1400 1250 1450 1220 1520 1220 1590 1143 1735',
  '410 1668 525 1668', '1663 1490 1810 1487', '1780 1303 1895 1305', '1895 1160 1900 1305', '1850 930 1880 1010 1910 1050', '1945 628 2005 688'
];
for (const [fill, p] of regions) add('regions', 'path', { d: 'M' + p + 'Z', fill });
for (const [stroke, w] of [['rgba(255,245,225,.65)', 11], ['#b0a49c', 5]]) {
  for (const [, p] of regions) add('borders', 'path', { d: 'M' + p + 'Z', fill: 'none', stroke, 'stroke-width': w });
  for (const p of lines) add('borders', 'path', { d: 'M' + p, fill: 'none', stroke, 'stroke-width': w });
}

// case counts: x, y, radius, label
const R = { a: 28, b: 43, c: 58, d: 73 };
`810 167 b 92|620 602 b 95|396 839 a 50|282 956 a 34|405 1064 a 25|593 1058 a 29|827 1104 a 25|968 1052 a 8|1155 1144 c 144|1188 1205 d 304|1027 1211 c 114|1052 1271 a 22|987 1348 a 31|1195 1298 c 132|270 1238 b 53|435 1232 a 20|579 1238 a 11|726 1241 a 37|870 1236 a 40|482 1409 a 26|696 1434 a 30|830 1395 a 24|162 1523 a 32|290 1505 b 65|465 1567 b 65|857 1541 a 25|629 1637 a 40|1058 1560 b 80|243 1766 b 82|501 1778 c 112|747 1743 c 149|1125 1835 c 142|31 2013 c 114|870 2084 a 31|1058 2337 b 94|20 2381 b 56|1251 403 a 19|1449 323 b 52|1575 404 b 66|1440 464 a 27|1781 476 a 37|2034 374 b 94|2286 209 c 160|1485 635 a 17|1584 600 a 45|2115 642 b 96|1914 719 a 23|1647 803 a 48|1778 878 a 43|1929 921 a 34|2105 827 b 67|2130 953 b 78|1517 953 a 48|1550 980 a 40|1584 1028 a 48|1436 1148 b 70|1323 1132 d 1,104|1293 1170 d 644|1373 1175 b 52|1971 1130 a 11|1293 1210 d 765|1343 1240 b 65|1811 1244 a 38|1976 1340 a 28|2178 1269 b 66|1827 1385 a 16|1331 1415 a 14|1657 1475 a 21|1365 1518 c 131|1686 1620 c 127|2186 1613 a 37|2367 1965 b 66|1953 2312 a 44`
  .split('|').map(s => s.split(' ')).map(([x, y, r, t]) => {
    add('bubbles', 'circle', { cx: x, cy: y, r: R[r] });
    return [x, y, t];
  }).forEach(([x, y, t]) => add('bubbles', 'text', { x, y: +y + 9 }, t));

// daily counts
const daily = [5,8,5,4,4,18,15,15,18,25,22,26,15,15,14,22,15,18,12,18,14,14,14,6,14,10,8,5,8,2,2,10,6,4,18,6,4,10,5,8,6,10,6,4,6,6,6,6,3,2,1,10,10,9,6,12,8,14,15,14,18,2,6,22,15,15,8,2,12,27,27,26,26,20,4,4,26,15,18,14,15,30,15,18,15,14,34,30,22,12,12,22,18,17,30,35,44,33,65,90,122,85,118,148,148,80,108,112,130,85,72,56,76,70,122,115,113,56,102,98,60,65,72,62,56,40,48,42,65,52,50,40,35,70,80,30,90,35,35,78,38,60,56,48,20,30,52,42,85,35,68,30,18,35,35,46,55,38,30,48,52,86,40,60,40,8,95,76,160,164,160,95,222,66,485,285,135,235,228,55,90,260,215,182,182,82,54,95,165,145];
const bw = 1128 / daily.length;
let d = 'M215 620';
daily.forEach((v, i) => { d += `V${620 - v * 0.72}H${215 + bw * (i + 1)}`; });
add('bars', 'path', { d: d + 'V620Z' });

// one marker per day along a polyline
function series(id, color, pts, n) {
  const a = [];
  for (let i = 0; i < pts.length; i += 2) a.push([pts[i], pts[i + 1]]);
  add(id, 'path', { d: 'M' + a.join('L'), fill: 'none', stroke: color, 'stroke-width': 4 });
  const x0 = a[0][0], x1 = a[a.length - 1][0];
  let k = 0;
  for (let i = 0; i <= n; i++) {
    const x = x0 + (x1 - x0) * i / n;
    while (k < a.length - 2 && x > a[k + 1][0]) k++;
    const t = (x - a[k][0]) / (a[k + 1][0] - a[k][0]);
    add(id, 'circle', { cx: x, cy: a[k][1] + t * (a[k + 1][1] - a[k][1]), r: 8, fill: color });
  }
}
series('cum', '#ffba42', [262,684,285,683,320,680,345,673,380,668,440,665,500,662,550,661,600,658,650,653,700,646,750,638,800,631,820,622,840,603,860,583,880,565,900,554,930,527,960,505,1000,489,1030,477,1060,462,1100,448,1130,436,1160,427,1190,411,1210,406,1230,378,1242,362,1250,356,1254,332,1260,318,1268,310,1272,298,1280,286,1288,282,1296,264,1304,250,1312,240,1322,234,1330,220,1340,212], 190);
series('hosp', '#ff7f7f', [241,896,400,891,559,884,700,879,850,872,990,870,1100,867], 135);
series('hosp', '#ffbebe', [241,872,290,870,340,864,380,856,420,847,470,839,510,825,545,794,580,752,605,738,640,711,660,686,720,658,760,635,830,613,860,595,930,567,960,559,1000,534,1020,502,1045,477,1060,458,1075,453,1100,429], 135);
series('hosp', '#ffe9bd', [241,905,330,902,400,895,460,890,500,882,525,872,560,834,590,809,612,801,640,766,665,759,730,731,790,700,850,676,880,673,910,660,950,636,965,616,975,589,988,572,995,549,1001,545,1005,499,1010,474,1018,469,1024,447,1030,425,1040,423,1047,398,1055,376,1068,347,1085,338,1100,314], 135);
```
